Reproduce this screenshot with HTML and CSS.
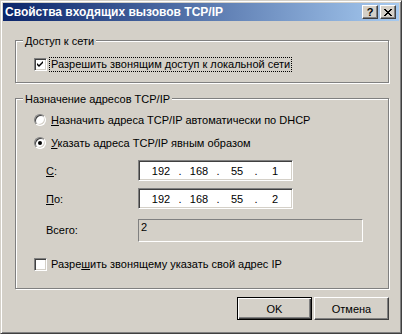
FILE: index.html
```html
<!DOCTYPE html>
<html lang="ru">
<head>
    <meta charset="UTF-8">
    <title>Свойства входящих вызовов TCP/IP</title>
    <link rel="stylesheet" href="styles.css">
</head>
<body>
    <div class="window">
        <div class="titlebar">
            <span class="title">Свойства входящих вызовов TCP/IP</span>
            <span class="caption-btn help">?</span>
            <span class="caption-btn close">
                <svg width="8" height="7" viewBox="0 0 8 7"><path d="M0 0h2v1h1v1h2v-1h1v-1h2v1h-1v1h-1v1h-1v1h1v1h1v1h1v1h-2v-1h-1v-1h-2v1h-1v1h-2v-1h1v-1h1v-1h1v-1h-1v-1h-1v-1h-1z" fill="#000"/></svg>
            </span>
        </div>

        <div class="body">
            <div class="group group-access">
                <div class="legend">Доступ к сети</div>
                <label class="row check-row">
                    <span class="checkbox checked">
                        <svg width="7" height="7" viewBox="0 0 7 7"><path d="M6 0v2l-4 4l-2-2v-2l2 2l4-4z" fill="#000"/></svg>
                    </span>
                    <span class="label focused">Разрешить звонящим доступ к локальной сети</span>
                </label>
            </div>

            <div class="group group-addr">
                <div class="legend">Назначение адресов TCP/IP</div>
                <label class="row radio-row first">
                    <span class="radio"></span>
                    <span class="label"><u>Н</u>азначить адреса TCP/IP автоматически по DHCP</span>
                </label>
                <label class="row radio-row">
                    <span class="radio selected"><span class="dot"></span></span>
                    <span class="label"><u>У</u>казать адреса TCP/IP явным образом</span>
                </label>

                <div class="row ip-row from">
                    <span class="field-label"><u>С</u>:</span>
                    <div class="ip-box">
                        <span class="octet">192</span><span class="sep">.</span>
                        <span class="octet">168</span><span class="sep">.</span>
                        <span class="octet">55</span><span class="sep">.</span>
                        <span class="octet">1</span>
                    </div>
                </div>
                <div class="row ip-row to">
                    <span class="field-label"><u>П</u>о:</span>
                    <div class="ip-box">
                        <span class="octet">192</span><span class="sep">.</span>
                        <span class="octet">168</span><span class="sep">.</span>
                        <span class="octet">55</span><span class="sep">.</span>
                        <span class="octet">2</span>
                    </div>
                </div>
                <div class="row total-row">
                    <span class="field-label">Всего:</span>
                    <div class="readonly-box">2</div>
                </div>

                <label class="row check-row last">
                    <span class="checkbox"></span>
                    <span class="label">Разре<u>ш</u>ить звонящему указать свой адрес IP</span>
                </label>
            </div>

            <div class="buttons">
                <button class="btn default">OK</button>
                <button class="btn">Отмена</button>
            </div>
        </div>
    </div>
</body>
</html>
```

FILE: styles.css
```css
body {
    margin: 0;
    font-family: 'Liberation Sans', Arial, sans-serif;
    font-size: 11px;
    color: #000;
    background-color: #d4d0c8;
}

.window {
    width: 402px;
    height: 334px;
    box-sizing: border-box;
    background-color: #d4d0c8;
    border: 1px solid;
    border-color: #d4d0c8 #404040 #404040 #d4d0c8;
    box-shadow: inset 1px 1px 0 #fff, inset -1px -1px 0 #808080;
    padding: 2px;
}

.titlebar {
    height: 18px;
    display: flex;
    align-items: center;
    padding: 0 3px 0 2px;
    background: linear-gradient(to right, #0a246a, #a6caf0);
}

.title {
    flex: 1;
    color: #fff;
    font-weight: bold;
    font-size: 12px;
    white-space: nowrap;
}

.caption-btn {
    width: 16px;
    height: 14px;
    box-sizing: border-box;
    display: flex;
    align-items: center;
    justify-content: center;
    background-color: #d4d0c8;
    border: 1px solid;
    border-color: #fff #404040 #404040 #fff;
    box-shadow: inset -1px -1px 0 #808080;
    font-weight: bold;
    font-size: 11px;
    line-height: 12px;
}

.caption-btn.close {
    margin-left: 2px;
}

.body {
    padding: 19px 10px 0 12px;
}

.group {
    border: 1px solid #808080;
    box-shadow: inset 1px 1px 0 #fff, 1px 1px 0 #fff;
    padding: 0 0 0 18px;
}

.group-access {
    padding-bottom: 8px;
}

.group-addr {
    margin-top: 15px;
    padding-bottom: 14px;
}

.legend {
    width: fit-content;
    height: 14px;
    line-height: 14px;
    margin: -7px 0 0 -11px;
    padding: 0 2px;
    background-color: #d4d0c8;
}

.row {
    display: flex;
    align-items: center;
    height: 20px;
}

.group-access .check-row {
    margin-top: 6px;
}

.radio-row.first {
    margin-top: 4px;
}

.radio-row {
    margin-top: 3px;
}

.label {
    margin-left: 4px;
    line-height: 13px;
    white-space: nowrap;
}

.label.focused {
    outline: 1px dotted #000;
    outline-offset: 0;
    padding: 0 1px;
    margin-left: 3px;
}

.checkbox {
    width: 13px;
    height: 13px;
    box-sizing: border-box;
    background-color: #fff;
    border: 1px solid;
    border-color: #808080 #fff #fff #808080;
    box-shadow: inset 1px 1px 0 #404040, inset -1px -1px 0 #d4d0c8;
    display: flex;
    align-items: center;
    justify-content: center;
}

.radio {
    width: 12px;
    height: 12px;
    box-sizing: border-box;
    border-radius: 50%;
    background-color: #fff;
    border: 1px solid;
    border-color: #808080 #fff #fff #808080;
    box-shadow: inset 1px 1px 0 #404040, inset -1px -1px 0 #d4d0c8;
    display: flex;
    align-items: center;
    justify-content: center;
    margin-right: 1px;
}

.radio .dot {
    width: 4px;
    height: 4px;
    border-radius: 50%;
    background-color: #000;
}

.ip-row {
    height: 21px;
    margin-top: 7px;
}

.field-label {
    width: 92px;
    margin-left: 12px;
}

.ip-box {
    width: 155px;
    height: 21px;
    box-sizing: border-box;
    background-color: #fff;
    border: 1px solid;
    border-color: #808080 #fff #fff #808080;
    box-shadow: inset 1px 1px 0 #404040, inset -1px -1px 0 #d4d0c8;
    display: flex;
    align-items: center;
    padding-left: 7px;
}

.octet {
    width: 30px;
    text-align: center;
}

.sep {
    width: 8px;
    text-align: center;
}

.total-row {
    height: 23px;
    margin-top: 10px;
    align-items: flex-start;
}

.total-row .field-label {
    line-height: 23px;
}

.readonly-box {
    width: 225px;
    height: 23px;
    box-sizing: border-box;
    border: 1px solid;
    border-color: #808080 #fff #fff #808080;
    padding: 1px 2px;
    line-height: 13px;
}

.check-row.last {
    margin-top: 12px;
}

.buttons {
    display: flex;
    justify-content: flex-end;
    gap: 2px;
    margin-top: 8px;
}

.btn {
    width: 75px;
    height: 23px;
    box-sizing: border-box;
    font-family: inherit;
    font-size: 11px;
    color: #000;
    background-color: #d4d0c8;
    border: 1px solid;
    border-color: #fff #404040 #404040 #fff;
    box-shadow: inset -1px -1px 0 #808080;
    padding: 0;
}

.btn.default {
    border-color: #000;
    box-shadow: inset 1px 1px 0 #fff, inset -1px -1px 0 #404040, inset -2px -2px 0 #808080;
}
```
